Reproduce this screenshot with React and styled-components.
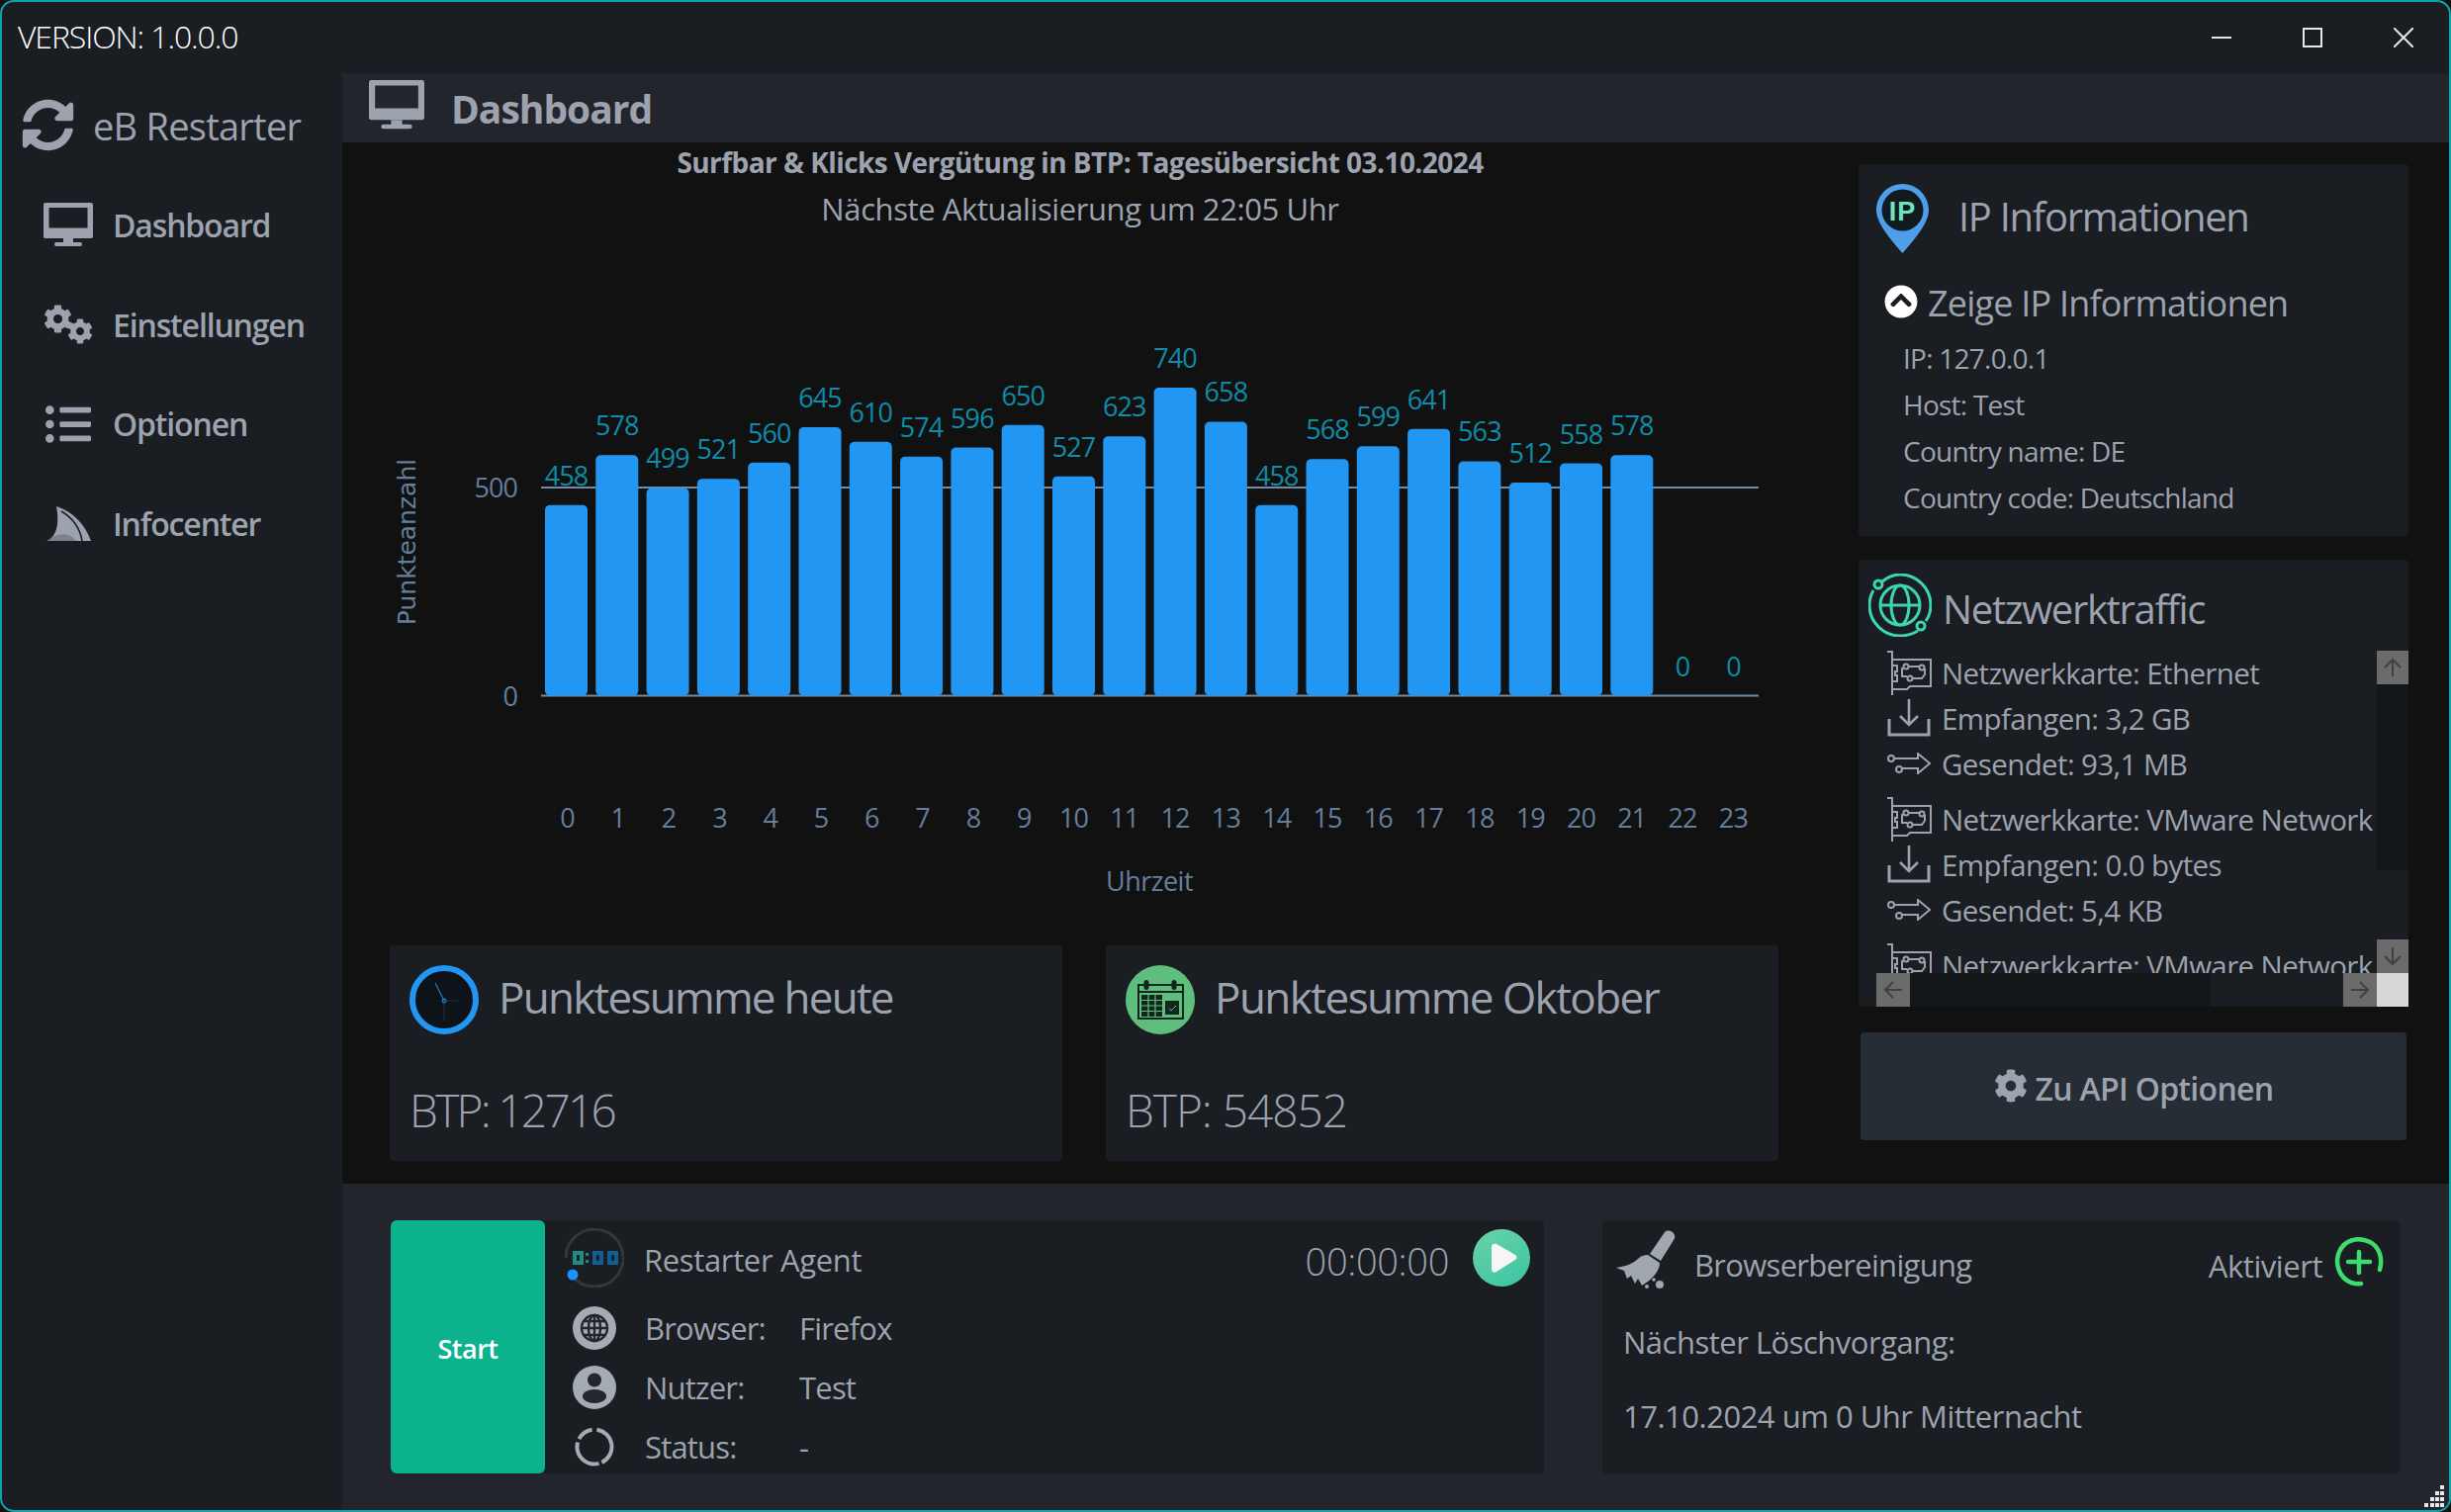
import React from 'react'
import styled, { createGlobalStyle } from 'styled-components'
import { FaSyncAlt, FaListUl, FaCog, FaChevronCircleUp } from 'react-icons/fa'

const values = [458, 578, 499, 521, 560, 645, 610, 574, 596, 650, 527, 623, 740, 658, 458, 568, 599, 641, 563, 512, 558, 578, 0, 0]

const Global = createGlobalStyle`
  html, body { margin: 0; padding: 0; background: #111; }
  * { box-sizing: border-box; }
  body { font-family: "Open Sans", "Noto Sans", sans-serif; color: #9ca3af; }
`

const Window = styled.div`
  position: relative;
  width: 2478px;
  height: 1529px;
  border: 2px solid #0da5a5;
  border-radius: 14px;
  background: #1a1d21;
  overflow: hidden;
  display: flex;
  flex-direction: column;
`

const TitleBar = styled.div`
  height: 72px;
  flex: none;
  display: flex;
  align-items: center;
  justify-content: space-between;
  padding-left: 16px;
`

const Version = styled.div`
  font-size: 32px;
  font-weight: 300;
  letter-spacing: -1.1px;
  color: #fff;
  margin-top: -4px;
`

const WinButtons = styled.div`
  display: flex;
  align-self: flex-start;
`

const WinButton = styled.div`
  width: 92px;
  height: 72px;
  display: flex;
  align-items: center;
  justify-content: center;
  svg { margin-top: -1px; }
`

const Body = styled.div`
  flex: 1;
  display: flex;
  min-height: 0;
`

const Sidebar = styled.div`
  width: 344px;
  flex: none;
  display: flex;
  flex-direction: column;
`

const Brand = styled.div`
  display: flex;
  align-items: center;
  gap: 19px;
  padding: 27px 0 0 20px;
  font-size: 38px;
  font-weight: 400;
  letter-spacing: -0.75px;
  svg { font-size: 53px; margin-top: -2px; }
`

const Nav = styled.div`
  margin-top: 23px;
  display: flex;
  flex-direction: column;
`

const NavItem = styled.div`
  height: 100.7px;
  padding: 2px 0 0 42px;
  display: flex;
  align-items: center;
  gap: 20px;
  font-size: 32px;
  font-weight: 600;
  letter-spacing: -1.15px;
`

const NavIcon = styled.div`
  width: 50px;
  display: flex;
  justify-content: center;
  font-size: 46px;
`

const CogPair = styled.div`
  width: 50px;
  height: 40px;
  display: flex;
  svg:first-child { font-size: 29px; flex: none; }
  svg:last-child { font-size: 26px; flex: none; margin: 14px 0 0 -5px; }
`

const Main = styled.div`
  flex: 1;
  display: flex;
  flex-direction: column;
  min-width: 0;
`

const Header = styled.div`
  height: 70px;
  flex: none;
  background: #22252b;
  display: flex;
  align-items: center;
  padding-left: 27px;
  gap: 27px;
  font-size: 39px;
  font-weight: 700;
  letter-spacing: -1px;
  svg { margin-top: -6px; }
`

const Content = styled.div`
  flex: 1;
  display: flex;
  background: #111;
  min-height: 0;
  padding-right: 41px;
`

const LeftCol = styled.div`
  width: 1492px;
  flex: none;
  display: flex;
  flex-direction: column;
`

const ChartTitle = styled.div`
  height: 40px;
  line-height: 40px;
  text-align: center;
  font-size: 28px;
  font-weight: 700;
  letter-spacing: -0.55px;
`

const ChartSubtitle = styled.div`
  height: 40px;
  line-height: 40px;
  margin-top: 7px;
  text-align: center;
  font-size: 31px;
  letter-spacing: -0.4px;
`

const ChartSvg = styled.svg`
  flex: 1;
  width: 100%;
  min-height: 0;
  display: block;
`

const SumRow = styled.div`
  display: flex;
  gap: 44px;
  padding: 0 0 23px 48px;
`

const SumCard = styled.div`
  width: 680px;
  height: 218px;
  background: #1a1d21;
  border-radius: 4px;
  padding: 20px;
`

const SumHead = styled.div`
  display: flex;
  align-items: center;
  gap: 20px;
  height: 70px;
  font-size: 44px;
  letter-spacing: ${p => p.$spacing}px;
  span { margin-top: -6px; }
`

const SumValue = styled.div`
  margin-top: 46px;
  height: 60px;
  line-height: 60px;
  font-size: 46px;
  font-weight: 300;
  letter-spacing: ${p => p.$spacing}px;
`

const RightCol = styled.div`
  width: 556px;
  flex: none;
  margin-left: 41px;
  padding-top: 22px;
  display: flex;
  flex-direction: column;
`

const Card = styled.div`
  background: #1a1d21;
  border-radius: 4px;
`

const IpCard = styled(Card)`
  height: 376px;
  padding-top: 20px;
`

const IpHead = styled.div`
  display: flex;
  align-items: center;
  height: 70px;
  padding-left: 18px;
  gap: 30px;
  font-size: 40px;
  font-weight: 400;
  letter-spacing: -1.3px;
  span { margin-top: -5px; }
`

const IpToggle = styled.div`
  margin-top: 29px;
  height: 40px;
  display: flex;
  align-items: center;
  padding-left: 26px;
  gap: 10px;
  font-size: 36px;
  letter-spacing: -0.8px;
  span { margin-top: 3px; }
  svg { color: #fff; font-size: 34px; flex: none; }
`

const IpRows = styled.div`
  margin-top: 14px;
  padding-left: 45px;
`

const IpRow = styled.div`
  height: 47px;
  line-height: 47px;
  font-size: 28px;
  letter-spacing: -0.75px;
`

const NetCard = styled(Card)`
  height: 452px;
  margin-top: 24px;
  display: flex;
  flex-direction: column;
`

const NetHead = styled.div`
  flex: none;
  height: 92px;
  padding: 14px 0 0 10px;
  display: flex;
  gap: 11px;
  font-size: 40px;
  letter-spacing: -1.35px;
  span { line-height: 72px; }
`

const NetScroller = styled.div`
  margin-left: 18px;
  flex: 1;
  min-height: 0;
  display: grid;
  grid-template-columns: 1fr 32px;
  grid-template-rows: 326px 34px;
`

const NetList = styled.div`
  overflow: hidden;
  padding-left: 10px;
  white-space: nowrap;
  margin-top: -1px;
`

const NetGroup = styled.div`
  margin-bottom: 10px;
`

const NetRow = styled.div`
  height: 46px;
  display: flex;
  align-items: center;
  gap: 10px;
  font-size: 29.5px;
  letter-spacing: -0.62px;
`

const NetIcon = styled.div`
  width: 46px;
  flex: none;
  display: flex;
  justify-content: center;
`

const VBar = styled.div`
  display: flex;
  flex-direction: column;
  justify-content: space-between;
`

const HBar = styled.div`
  display: flex;
  justify-content: space-between;
`

const Thumb = styled.div`
  background: #14171a;
  flex: none;
  ${p => p.$vertical ? 'height: 188px;' : 'width: 304px; height: 34px;'}
`

const ThumbGroup = styled.div`
  display: flex;
  flex-direction: ${p => p.$vertical ? 'column' : 'row'};
`

const ScrollBtn = styled.div`
  width: ${p => p.$vertical ? '32px' : '34px'};
  height: 34px;
  flex: none;
  background: #6b6b6b;
  display: flex;
  align-items: center;
  justify-content: center;
`

const ScrollCorner = styled.div`
  background: #d8d8d8;
`

const ApiButton = styled.div`
  margin: 26px 2px 0;
  height: 109px;
  padding-top: 4px;
  background: #272d35;
  border-radius: 4px;
  display: flex;
  align-items: center;
  justify-content: center;
  gap: 8px;
  font-size: 32px;
  font-weight: 600;
  letter-spacing: -0.7px;
  svg { font-size: 34px; margin-top: -6px; }
`

const Footer = styled.div`
  flex: none;
  height: 330px;
  background: #22252b;
  padding: 37px 0 0 49px;
  display: flex;
  gap: 59px;
`

const AgentCard = styled(Card)`
  width: 1166px;
  height: 256px;
  display: flex;
`

const StartButton = styled.div`
  width: 156px;
  flex: none;
  background: #0cb28e;
  border-radius: 6px;
  padding-top: 3px;
  display: flex;
  align-items: center;
  justify-content: center;
  color: #fff;
  font-size: 27px;
  font-weight: 600;
  letter-spacing: -0.5px;
`

const AgentBody = styled.div`
  flex: 1;
  padding: 8px 14px 0 20px;
`

const AgentTop = styled.div`
  display: flex;
  align-items: center;
  height: 60px;
  font-size: 31px;
`

const AgentName = styled.div`
  flex: 1;
  margin: 4px 0 0 20px;
  letter-spacing: -0.35px;
`

const Timer = styled.div`
  font-size: 38px;
  font-weight: 300;
  letter-spacing: -0.35px;
  margin: 6px 24px 0 0;
`

const AgentGrid = styled.div`
  margin-top: 11px;
  display: grid;
  grid-template-columns: 60px 135px 1fr;
  grid-auto-rows: 60px;
  column-gap: 21px;
  align-items: center;
  font-size: 31px;
  letter-spacing: -0.8px;
`

const AgentIcon = styled.div`
  display: flex;
  justify-content: center;
`

const BrowserCard = styled(Card)`
  width: 806px;
  height: 256px;
  padding: 10px 16px 0 14px;
  font-size: 31px;
  letter-spacing: -0.5px;
`

const BrowserHead = styled.div`
  display: flex;
  align-items: center;
  height: 60px;
  margin-bottom: 15px;
  gap: 18px;
  letter-spacing: -0.7px;
`

const BrowserTitle = styled.div`
  flex: 1;
  margin-top: 10px;
`

const Active = styled.div`
  display: flex;
  align-items: center;
  gap: 12px;
  letter-spacing: -0.45px;
  span { margin-top: 12px; }
  svg { margin-top: 3px; }
`

const BrowserLine = styled.div`
  margin-left: 7px;
  height: 75px;
  line-height: 77px;
`

const Grip = styled.svg`
  position: absolute;
  right: 4px;
  bottom: 3px;
`

function ChartDrawing() {
  const base = 703.5
  const scale = 0.421
  return (
    <ChartSvg viewBox="346 231 1492 725" preserveAspectRatio="none">
      <g fontFamily='"Open Sans", sans-serif' fontSize="27" letterSpacing="-0.9">
        <line x1="547" x2="1778" y1="493" y2="493" stroke="#6f8ba6" strokeWidth="2" />
        <line x1="547" x2="1778" y1="703.5" y2="703.5" stroke="#6f8ba6" strokeWidth="2" />
        {values.map((v, i) => {
          const cx = 572.5 + 51.3 * i
          const h = v * scale
          return (
            <g key={i}>
              {v > 0 && <rect x={cx - 21.5} y={base - h} width="43" height={h} rx="5" fill="#2196f3" />}
              <text x={cx} y={base - h - 20} textAnchor="middle" fill="#0e8ca8">{v}</text>
              <text x={i < 10 ? cx + 1 : cx} y="837" textAnchor="middle" fill="#637f9c">{i}</text>
            </g>
          )
        })}
        <text x="523" y="503" textAnchor="end" fill="#637f9c">500</text>
        <text x="523" y="714" textAnchor="end" fill="#637f9c">0</text>
        <text x="1162" y="901" textAnchor="middle" fill="#637f9c" letterSpacing="-0.5">Uhrzeit</text>
        <text transform="translate(420 548) rotate(-90)" textAnchor="middle" fill="#637f9c" fontFamily='"DejaVu Sans", sans-serif' letterSpacing="0" fontSize="25">Punkteanzahl</text>
      </g>
    </ChartSvg>
  )
}

const DesktopIcon = ({ size }) => (
  <svg width={size} height={size * 0.88} viewBox="0 0 50 44" fill="currentColor" style={{ flex: 'none' }}>
    <path fillRule="evenodd" d="M2 0H48A2 2 0 0 1 50 2V34A2 2 0 0 1 48 36H2A2 2 0 0 1 0 34V2A2 2 0 0 1 2 0ZM5.500 5V25.500H44.500V5Z" />
    <rect x="20" y="36" width="10" height="4.500" />
    <rect x="11" y="40" width="28" height="4" rx="2" />
  </svg>
)

const SharkFin = () => (
  <svg width="45" height="35" viewBox="0 0 45 35" fill="currentColor">
    <path d="M10 0C26 5 39 18 45 35H0C8 32 14 22 10 0Z" />
    <path d="M15 5C27 12 34 23 36 35" fill="none" stroke="#1a1d21" strokeWidth="1.500" />
    <path d="M0 35C10 28 22 24 30 35Z" fill="#1a1d21" opacity="0.25" />
  </svg>
)

const IpPin = () => (
  <svg width="53" height="70" viewBox="0 0 53 70" style={{ flex: 'none' }}>
    <path d="M26.500 0C11.900 0 0 11.900 0 26.500C0 40 16 58 26.500 70C37 58 53 40 53 26.500C53 11.900 41.100 0 26.500 0Z" fill="#4f9eea" />
    <circle cx="26.500" cy="26.500" r="21" fill="#111a1e" />
    <text x="26.500" y="36.500" textAnchor="middle" fontFamily='"Liberation Sans", sans-serif' fontWeight="700" fontSize="27" letterSpacing="1" fill="#6fe3bf">IP</text>
  </svg>
)

const NetGlobe = () => (
  <svg width="64" height="64" viewBox="0 0 64 64" fill="none" stroke="#3ad6b0" strokeWidth="3" style={{ flex: 'none' }}>
    <path d="M14 8C20 3 26 1 32 1C49 1 63 15 63 32C63 38 61 44 58 48" />
    <path d="M50 58C45 61 39 63 32 63C15 63 1 49 1 32C1 27 2 22 5 17" />
    <circle cx="10" cy="11" r="4" />
    <circle cx="53" cy="53" r="4" />
    <circle cx="32" cy="32" r="20" />
    <ellipse cx="32" cy="32" rx="9" ry="20" />
    <path d="M12 32H52" />
  </svg>
)

const CardIcon = () => (
  <svg width="46" height="45" viewBox="0 0 46 45" fill="none" stroke="#9ca3af" strokeWidth="2">
    <path d="M1 1H6V45" />
    <path d="M6 9H45V36H24L21 39H6" />
    <path d="M6 15H11V21H9V25H11V31H6" />
    <circle cx="20" cy="16" r="2.500" />
    <circle cx="24" cy="28" r="2.500" />
    <circle cx="36" cy="17" r="2.500" />
    <path d="M23 16H33M27 28H36L39 24V18M16 17V26H21" />
  </svg>
)

const DownIcon = () => (
  <svg width="44" height="38" viewBox="0 0 44 38" fill="none" stroke="#9ca3af" strokeWidth="2.600">
    <path d="M22 0V26M13 17L22 26L31 17" />
    <path d="M2 20V36H42V20" strokeWidth="3" />
  </svg>
)

const SendIcon = () => (
  <svg width="44" height="22" viewBox="0 0 44 22" fill="none" stroke="#9ca3af" strokeWidth="2">
    <circle cx="4" cy="6" r="3" />
    <circle cx="12" cy="17" r="3" />
    <path d="M7 6H31V1L43 11L31 21V16H15" />
  </svg>
)

const TimerIcon = () => (
  <svg width="60" height="60" viewBox="0 0 60 60" style={{ flex: 'none' }}>
    <path d="M1 30A29 29 0 1 1 8 49" fill="none" stroke="#33363a" strokeWidth="3" />
    <rect x="8" y="23" width="11" height="14" fill="#1f8a86" />
    <rect x="12" y="27" width="3" height="6" fill="#1a1d21" />
    <rect x="21" y="25" width="3" height="3" fill="#1f8a86" />
    <rect x="21" y="32" width="3" height="3" fill="#1f8a86" />
    <rect x="28" y="23" width="11" height="14" fill="#0f5f96" />
    <rect x="32" y="27" width="3" height="6" fill="#1a1d21" />
    <rect x="43" y="23" width="11" height="14" fill="#0f5f96" />
    <rect x="47" y="27" width="3" height="6" fill="#1a1d21" />
    <circle cx="8" cy="47" r="5.500" fill="#1e90ff" />
  </svg>
)

const GlobeCircle = () => (
  <svg width="44" height="44" viewBox="0 0 44 44" fill="none">
    <circle cx="22" cy="22" r="22" fill="#a5abb3" />
    <g stroke="#23262b" strokeWidth="2.400">
      <circle cx="22" cy="22" r="13" />
      <ellipse cx="22" cy="22" rx="6" ry="13" />
      <path d="M9 22H35M11 15H33M11 29H33M22 9V35" />
    </g>
  </svg>
)

const UserCircle = () => (
  <svg width="44" height="44" viewBox="0 0 44 44" fill="#23262b">
    <circle cx="22" cy="22" r="22" fill="#a5abb3" />
    <circle cx="22" cy="14.500" r="7" />
    <ellipse cx="22" cy="31" rx="12" ry="7" />
  </svg>
)

const StatusRing = () => (
  <svg width="40" height="40" viewBox="0 0 40 40" fill="none" stroke="#a5abb3" strokeWidth="4">
    <path d="M22.400 2.700A17.500 17.500 0 0 1 27.400 35.900" />
    <path d="M24.500 36.900A17.500 17.500 0 0 1 3.100 15.500" />
    <path d="M4.400 12.050A17.500 17.500 0 0 1 17.600 2.670" />
  </svg>
)

const PlayIcon = () => (
  <svg width="58" height="58" viewBox="0 0 58 58" style={{ flex: 'none' }}>
    <defs>
      <linearGradient id="playBg" x1="0.2" y1="0" x2="0.8" y2="1">
        <stop offset="0" stopColor="#66d2a8" />
        <stop offset="1" stopColor="#3fc5a3" />
      </linearGradient>
    </defs>
    <circle cx="29" cy="29" r="29" fill="url(#playBg)" />
    <path d="M19 18C19 15 21 14 24 15L43 26C45 27.500 45 29.500 43 31L24 43C21 44.500 19 43.500 19 40Z" fill="#f6f6f6" />
  </svg>
)

const BroomIcon = () => (
  <svg width="61" height="60" viewBox="0 0 61 60" fill="#a0a7af" style={{ flex: 'none' }}>
    <path d="M49 2C52 -1 58 1 59 5C59.500 7 59 9 58 10L45 31L34 24Z" />
    <path d="M32 25L44 33C44 40 38 49 26 56L22 49L19 54L15 46L11 49L8 41L0 38C6 37 16 35 22 29C25 26 28 25 32 25Z" />
    <circle cx="44" cy="55" r="4" />
    <circle cx="31" cy="57" r="2" />
    <circle cx="38" cy="50" r="1.800" />
  </svg>
)

const PlusIcon = () => (
  <svg width="50" height="50" viewBox="0 0 50 50" fill="none" stroke="#3ddc6e" strokeWidth="4.500" strokeLinecap="round" style={{ flex: 'none' }}>
    <path d="M46 33C49 22 46 10 36 5C24 -1 10 3 5 15C0 27 5 41 17 46C20 47 23 48 27 47" />
    <path d="M25 15V36M14 25H36" />
  </svg>
)

const ClockIcon = () => (
  <svg width="70" height="70" viewBox="0 0 70 70" style={{ flex: 'none' }}>
    <circle cx="35" cy="35" r="32" fill="#0e1319" stroke="#2196f3" strokeWidth="6" />
    <path d="M35 36L26 18" stroke="#2a74c0" strokeWidth="1.200" />
    <path d="M35 36V56M35 36H50" stroke="#1b2a44" strokeWidth="1.200" />
    <circle cx="35" cy="36" r="2" fill="none" stroke="#2196f3" strokeWidth="1" />
  </svg>
)

const CalendarIcon = () => (
  <svg width="70" height="70" viewBox="0 0 70 70" style={{ flex: 'none' }}>
    <circle cx="35" cy="35" r="35" fill="#5fbd7d" />
    <g fill="none" stroke="#13261b" strokeWidth="2">
      <rect x="13" y="20" width="45" height="34" />
      <path d="M13 27H58" />
    </g>
    <rect x="18.500" y="15" width="5" height="10" rx="2.500" fill="#13261b" />
    <rect x="46.500" y="15" width="5" height="10" rx="2.500" fill="#13261b" />
    <rect x="16" y="30" width="21" height="22" fill="#13261b" />
    <path d="M16 35.500H37M16 41H37M16 46.500H37M23 30V52M30 30V52" stroke="#5fbd7d" strokeWidth="1.200" />
    <rect x="40" y="36" width="14" height="14" fill="#13261b" />
    <path d="M44 43.500L46 46L51 41" fill="none" stroke="#5fbd7d" strokeWidth="1" />
  </svg>
)

const Arrow = ({ rotate }) => (
  <svg width="20" height="20" viewBox="0 0 20 20" fill="none" stroke="#3f4042" strokeWidth="2" style={{ transform: `rotate(${rotate}deg)` }}>
    <path d="M10 19V2M2 10L10 2L18 10" />
  </svg>
)

function Traffic({ name, received, sent }) {
  return (
    <NetGroup>
      <NetRow><NetIcon><CardIcon /></NetIcon>Netzwerkkarte: {name}</NetRow>
      {received && <NetRow><NetIcon><DownIcon /></NetIcon>Empfangen: {received}</NetRow>}
      {sent && <NetRow><NetIcon><SendIcon /></NetIcon>Gesendet: {sent}</NetRow>}
    </NetGroup>
  )
}

export default function App() {
  return (
    <Window>
      <Global />
      <TitleBar>
        <Version>VERSION: 1.0.0.0</Version>
        <WinButtons>
          <WinButton>
            <svg width="20" height="20" viewBox="0 0 20 20" stroke="#e6e6e6" strokeWidth="2"><path d="M0 10H20" /></svg>
          </WinButton>
          <WinButton>
            <svg width="20" height="20" viewBox="0 0 20 20" fill="none" stroke="#e6e6e6" strokeWidth="2"><rect x="1" y="1" width="18" height="18" /></svg>
          </WinButton>
          <WinButton>
            <svg width="20" height="20" viewBox="0 0 20 20" stroke="#e6e6e6" strokeWidth="2"><path d="M0 0L20 20M20 0L0 20" /></svg>
          </WinButton>
        </WinButtons>
      </TitleBar>
      <Body>
        <Sidebar>
          <Brand><FaSyncAlt />eB Restarter</Brand>
          <Nav>
            <NavItem><NavIcon><DesktopIcon size={50} /></NavIcon>Dashboard</NavItem>
            <NavItem><NavIcon><CogPair><FaCog /><FaCog /></CogPair></NavIcon>Einstellungen</NavItem>
            <NavItem><NavIcon><FaListUl /></NavIcon>Optionen</NavItem>
            <NavItem><NavIcon><SharkFin /></NavIcon>Infocenter</NavItem>
          </Nav>
        </Sidebar>
        <Main>
          <Header><DesktopIcon size={56} />Dashboard</Header>
          <Content>
            <LeftCol>
              <ChartTitle>Surfbar &amp; Klicks Vergütung in BTP: Tagesübersicht 03.10.2024</ChartTitle>
              <ChartSubtitle>Nächste Aktualisierung um 22:05 Uhr</ChartSubtitle>
              <ChartDrawing />
              <SumRow>
                <SumCard>
                  <SumHead $spacing={-1.75}><ClockIcon /><span>Punktesumme heute</span></SumHead>
                  <SumValue $spacing={-2.7}>BTP: 12716</SumValue>
                </SumCard>
                <SumCard>
                  <SumHead $spacing={-1.55}><CalendarIcon /><span>Punktesumme Oktober</span></SumHead>
                  <SumValue $spacing={-1}>BTP: 54852</SumValue>
                </SumCard>
              </SumRow>
            </LeftCol>
            <RightCol>
              <IpCard>
                <IpHead><IpPin /><span>IP Informationen</span></IpHead>
                <IpToggle><FaChevronCircleUp /><span>Zeige IP Informationen</span></IpToggle>
                <IpRows>
                  <IpRow>IP: 127.0.0.1</IpRow>
                  <IpRow>Host: Test</IpRow>
                  <IpRow>Country name: DE</IpRow>
                  <IpRow>Country code: Deutschland</IpRow>
                </IpRows>
              </IpCard>
              <NetCard>
                <NetHead><NetGlobe /><span>Netzwerktraffic</span></NetHead>
                <NetScroller>
                  <NetList>
                    <Traffic name="Ethernet" received="3,2 GB" sent="93,1 MB" />
                    <Traffic name="VMware Network" received="0.0 bytes" sent="5,4 KB" />
                    <Traffic name="VMware Network" />
                  </NetList>
                  <VBar>
                    <ThumbGroup $vertical>
                      <ScrollBtn $vertical><Arrow rotate={0} /></ScrollBtn>
                      <Thumb $vertical />
                    </ThumbGroup>
                    <ScrollBtn $vertical><Arrow rotate={180} /></ScrollBtn>
                  </VBar>
                  <HBar>
                    <ThumbGroup>
                      <ScrollBtn><Arrow rotate={-90} /></ScrollBtn>
                      <Thumb />
                    </ThumbGroup>
                    <ScrollBtn><Arrow rotate={90} /></ScrollBtn>
                  </HBar>
                  <ScrollCorner />
                </NetScroller>
              </NetCard>
              <ApiButton><FaCog />Zu API Optionen</ApiButton>
            </RightCol>
          </Content>
          <Footer>
            <AgentCard>
              <StartButton>Start</StartButton>
              <AgentBody>
                <AgentTop>
                  <TimerIcon />
                  <AgentName>Restarter Agent</AgentName>
                  <Timer>00:00:00</Timer>
                  <PlayIcon />
                </AgentTop>
                <AgentGrid>
                  <AgentIcon><GlobeCircle /></AgentIcon><div>Browser:</div><div>Firefox</div>
                  <AgentIcon><UserCircle /></AgentIcon><div>Nutzer:</div><div>Test</div>
                  <AgentIcon><StatusRing /></AgentIcon><div>Status:</div><div>-</div>
                </AgentGrid>
              </AgentBody>
            </AgentCard>
            <BrowserCard>
              <BrowserHead>
                <BroomIcon />
                <BrowserTitle>Browserbereinigung</BrowserTitle>
                <Active><span>Aktiviert</span><PlusIcon /></Active>
              </BrowserHead>
              <BrowserLine>Nächster Löschvorgang:</BrowserLine>
              <BrowserLine>17.10.2024 um 0 Uhr Mitternacht</BrowserLine>
            </BrowserCard>
          </Footer>
        </Main>
      </Body>
      <Grip width="22" height="22" viewBox="0 0 22 22" fill="#e8e8e8">
        <rect x="17" y="0" width="4" height="4" />
        <rect x="12" y="6" width="4" height="4" /><rect x="17" y="6" width="4" height="4" />
        <rect x="7" y="12" width="4" height="4" /><rect x="12" y="12" width="4" height="4" /><rect x="17" y="12" width="4" height="4" />
        <rect x="1" y="18" width="4" height="4" /><rect x="7" y="18" width="4" height="4" /><rect x="12" y="18" width="4" height="4" /><rect x="17" y="18" width="4" height="4" />
      </Grip>
    </Window>
  )
}
